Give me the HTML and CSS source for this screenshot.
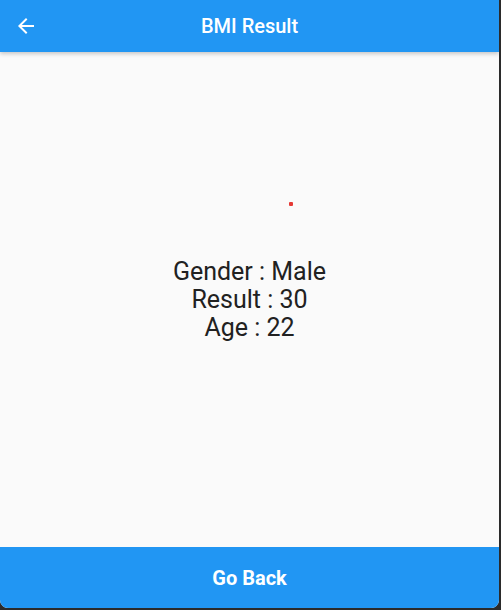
FILE: index.html
```html
<!DOCTYPE html>
<html lang="en">
<head>
<meta charset="utf-8">
<title>BMI Result</title>
<link rel="stylesheet" href="styles.css">
</head>
<body>
<div class="window">
  <header class="appbar">
    <button class="back" aria-label="Back">
      <svg viewBox="0 0 24 24" width="24" height="24"><path fill="#fff" d="M20 11H7.830l5.59-5.59L12 4l-8 8 8 8 1.41-1.41L7.83 13H20v-2z"/></svg>
    </button>
    <h1 class="title">BMI Result</h1>
  </header>
  <main class="content">
    <span class="dot"></span>
    <div class="info">
      <p>Gender : Male</p>
      <p>Result : 30</p>
      <p>Age : 22</p>
    </div>
  </main>
  <button class="go-back">Go Back</button>
</div>
</body>
</html>
```
FILE: styles.css
```css
html, body {
  margin: 0;
  padding: 0;
  background: #2b2b2b;
}
body {
  width: 501px;
  height: 610px;
  overflow: hidden;
  font-family: Roboto, "Noto Sans", sans-serif;
}
.window {
  width: 499px;
  height: 608px;
  display: flex;
  flex-direction: column;
  background: #fafafa;
  border-radius: 0 0 8px 8px;
  overflow: hidden;
}
.appbar {
  position: relative;
  z-index: 1;
  height: 52px;
  flex: none;
  background: #2196f3;
  display: flex;
  align-items: center;
  justify-content: center;
  box-shadow: 0 2px 4px rgba(0,0,0,0.2);
}
.back {
  position: absolute;
  left: 14px;
  top: 14px;
  width: 24px;
  height: 24px;
  padding: 0;
  border: 0;
  background: none;
  display: flex;
}
.title {
  margin: 0;
  color: #fff;
  font-size: 20px;
  font-weight: 500;
  line-height: 24px;
}
.content {
  position: relative;
  flex: 1;
  display: flex;
  align-items: center;
  justify-content: center;
}
.dot {
  position: absolute;
  left: 289px;
  top: 150px;
  width: 4px;
  height: 4px;
  background: #e53935;
  border-radius: 1px;
}
.info {
  text-align: center;
  color: #212121;
  font-size: 25px;
  line-height: 28px;
  margin-top: 1px;
}
.info p {
  margin: 0;
}
.go-back {
  flex: none;
  height: 61px;
  border: 0;
  margin: 0;
  background: #2196f3;
  color: #fff;
  font-family: Roboto, "Noto Sans", sans-serif;
  font-size: 20px;
  font-weight: 700;
  padding: 0;
}
```
